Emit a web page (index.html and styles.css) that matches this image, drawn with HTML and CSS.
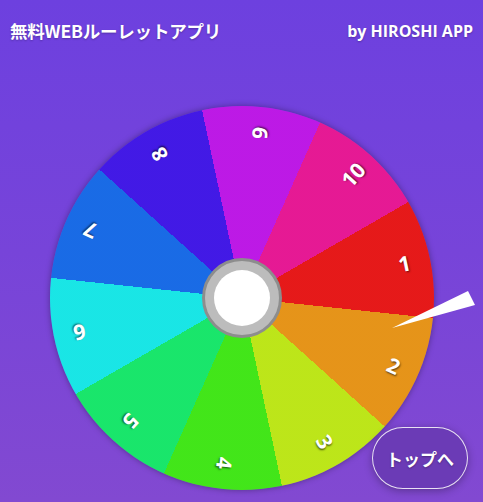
FILE: index.html
```html
<!DOCTYPE html>
<html lang="ja">
<head>
<meta charset="utf-8">
<title>無料WEBルーレットアプリ</title>
<link rel="stylesheet" href="styles.css">
</head>
<body>
<div class="page">
  <header class="header">
    <h1 class="title">無料WEBルーレットアプリ</h1>
    <div class="by">by HIROSHI APP</div>
  </header>
  <main class="stage">
    <div class="wheel">
      <span class="label l1">1</span>
      <span class="label l2">2</span>
      <span class="label l3">3</span>
      <span class="label l4">4</span>
      <span class="label l5">5</span>
      <span class="label l6">6</span>
      <span class="label l7">7</span>
      <span class="label l8">8</span>
      <span class="label l9">9</span>
      <span class="label l10">10</span>
      <div class="hub"><div class="hub-inner"></div></div>
    </div>
    <svg class="pointer" width="90" height="46" viewBox="0 0 90 46">
      <polygon points="2,44 78,7 85,21" fill="#ffffff"/>
    </svg>
  </main>
  <a class="top-btn" href="#">トップへ</a>
</div>
</body>
</html>
```
FILE: styles.css
```css
html, body {
  margin: 0;
  padding: 0;
}
body {
  width: 483px;
  height: 502px;
  overflow: hidden;
  background: linear-gradient(to bottom, #6d40df 0%, #7744d9 50%, #8249d1 100%);
  font-family: "Noto Sans", "Noto Sans CJK JP", sans-serif;
  color: #fff;
}
.page {
  position: relative;
  height: 502px;
  display: flex;
  flex-direction: column;
}
.header {
  height: 62px;
  display: flex;
  align-items: center;
  justify-content: space-between;
  padding: 0 10px 0 10px;
}
.title {
  margin: 0;
  font-family: "Noto Sans CJK JP", sans-serif;
  font-weight: 700;
  font-size: 17.5px;
  line-height: 24px;
  letter-spacing: -0.2px;
  text-shadow: 0 1px 2px rgba(0,0,0,0.25);
}
.by {
  font-family: "Open Sans", "Noto Sans", sans-serif;
  font-weight: 700;
  font-size: 16px;
  line-height: 24px;
  text-shadow: 0 1px 2px rgba(0,0,0,0.25);
}
.stage {
  position: relative;
  display: flex;
  justify-content: center;
  padding-top: 44px;
}
.wheel {
  position: relative;
  width: 384px;
  height: 384px;
  border-radius: 50%;
  background: conic-gradient(from 60deg,
    hsl(0,80%,50%) 0deg 36deg,
    hsl(36,80%,50%) 36deg 72deg,
    hsl(72,80%,50%) 72deg 108deg,
    hsl(108,80%,50%) 108deg 144deg,
    hsl(144,80%,50%) 144deg 180deg,
    hsl(180,80%,50%) 180deg 216deg,
    hsl(216,80%,50%) 216deg 252deg,
    hsl(252,80%,50%) 252deg 288deg,
    hsl(288,80%,50%) 288deg 324deg,
    hsl(324,80%,50%) 324deg 360deg);
  box-shadow: 0 0 6px rgba(0,0,0,0.35);
}
.label {
  position: absolute;
  left: 50%;
  top: 50%;
  width: 40px;
  height: 26px;
  margin: -13px 0 0 -20px;
  text-align: center;
  line-height: 26px;
  font-family: "Noto Sans", sans-serif;
  font-weight: 700;
  font-size: 21px;
  color: #fff;
  text-shadow: 1px 1px 2px rgba(0,0,0,0.6);
}
.l1 { transform: rotate(-12deg) translateX(166px); }
.l2 { transform: rotate(24deg) translateX(166px); }
.l3 { transform: rotate(60deg) translateX(166px); }
.l4 { transform: rotate(96deg) translateX(166px); }
.l5 { transform: rotate(132deg) translateX(166px); }
.l6 { transform: rotate(168deg) translateX(166px); }
.l7 { transform: rotate(204deg) translateX(166px); }
.l8 { transform: rotate(240deg) translateX(166px); }
.l9 { transform: rotate(276deg) translateX(166px); }
.l10 { transform: rotate(312deg) translateX(166px); }
.hub {
  position: absolute;
  left: 50%;
  top: 50%;
  width: 74px;
  height: 74px;
  margin: -40px 0 0 -40px;
  border-radius: 50%;
  border: 3px solid #8d8d8d;
  background: #bcbcbc;
  display: flex;
  align-items: center;
  justify-content: center;
}
.hub-inner {
  width: 56px;
  height: 56px;
  border-radius: 50%;
  background: #fff;
}
.pointer {
  position: absolute;
  left: 390px;
  top: 222px;
}
.top-btn {
  position: absolute;
  right: 15px;
  bottom: 13px;
  width: 94px;
  height: 60px;
  border-radius: 31px;
  border: 1.5px solid rgba(255,255,255,0.85);
  background: #6b3bb6;
  box-shadow: 0 2px 8px rgba(0,0,0,0.3);
  display: flex;
  align-items: center;
  justify-content: center;
  color: #fff;
  text-decoration: none;
  font-family: "Noto Sans CJK JP", sans-serif;
  font-weight: 700;
  font-size: 17px;
  line-height: 1;
  text-shadow: 0 1px 2px rgba(0,0,0,0.3);
}
```
